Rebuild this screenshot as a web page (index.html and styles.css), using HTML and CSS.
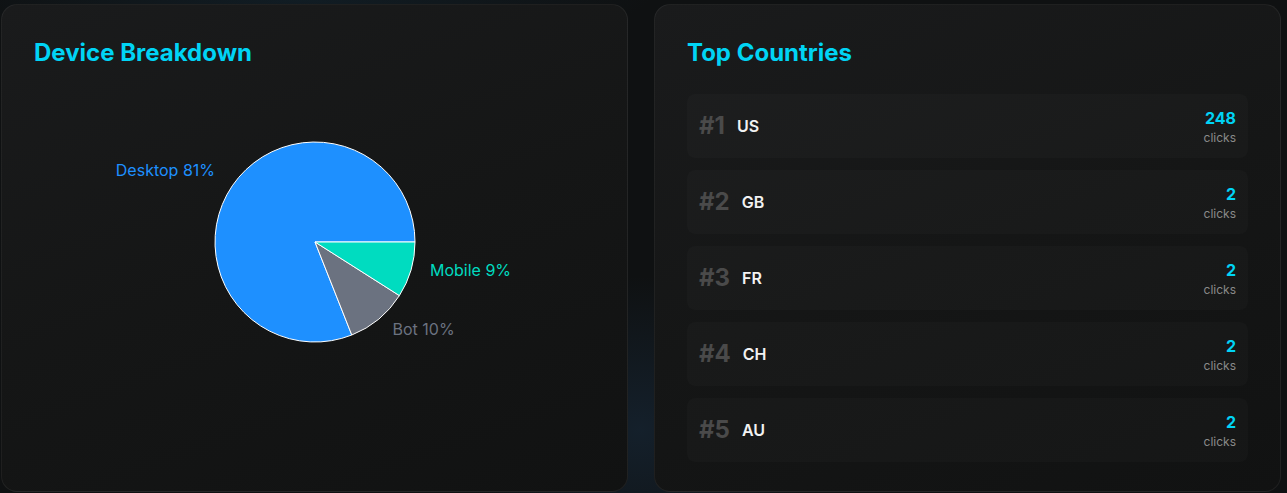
FILE: index.html
```html
<!DOCTYPE html>
<html lang="en">
<head>
<meta charset="utf-8">
<title>Analytics</title>
<link rel="stylesheet" href="styles.css">
</head>
<body>
<main class="grid">
  <section class="card">
    <h2 class="card-title">Device Breakdown</h2>
    <div class="chart">
      <svg class="pie" width="627" height="300" viewBox="0 0 627 300">
        <g transform="translate(-2,-94)">
          <path d="M315 242 L415 242 A100 100 0 1 0 351.8 335 Z" fill="#1e90ff" stroke="#fff" stroke-width="1"/>
          <path d="M315 242 L351.8 335 A100 100 0 0 0 399.4 295.6 Z" fill="#6b7280" stroke="#fff" stroke-width="1"/>
          <path d="M315 242 L399.4 295.6 A100 100 0 0 0 415 242 Z" fill="#00dcc0" stroke="#fff" stroke-width="1"/>
          <text x="215" y="175.5" text-anchor="end" class="lbl" fill="#1e90ff">Desktop 81%</text>
          <text x="430" y="276" class="lbl" fill="#00dcc0">Mobile 9%</text>
          <text x="392.5" y="334.5" class="lbl" fill="#6b7280">Bot 10%</text>
        </g>
      </svg>
    </div>
  </section>
  <section class="card">
    <h2 class="card-title">Top Countries</h2>
    <ul class="list">
      <li class="row"><div class="left"><span class="rank">#1</span><span class="country">US</span></div><div class="right"><span class="num">248</span><span class="unit">clicks</span></div></li>
      <li class="row"><div class="left"><span class="rank">#2</span><span class="country">GB</span></div><div class="right"><span class="num">2</span><span class="unit">clicks</span></div></li>
      <li class="row"><div class="left"><span class="rank">#3</span><span class="country">FR</span></div><div class="right"><span class="num">2</span><span class="unit">clicks</span></div></li>
      <li class="row"><div class="left"><span class="rank">#4</span><span class="country">CH</span></div><div class="right"><span class="num">2</span><span class="unit">clicks</span></div></li>
      <li class="row"><div class="left"><span class="rank">#5</span><span class="country">AU</span></div><div class="right"><span class="num">2</span><span class="unit">clicks</span></div></li>
    </ul>
  </section>
</main>
</body>
</html>
```

FILE: styles.css
```css
* { box-sizing: border-box; }
html, body { margin: 0; height: 100%; }
body {
  font-family: Inter, "Noto Sans", sans-serif;
  background:
    radial-gradient(ellipse 260px 220px at 640px 430px, rgba(30,60,90,0.35), transparent 70%),
    radial-gradient(ellipse 500px 60px at 300px 0px, rgba(20,50,70,0.35), transparent 70%),
    #0f1112;
  overflow: hidden;
  padding: 4px 0 0 1px;
}
.grid {
  display: grid;
  grid-template-columns: 627px 627px;
  gap: 26px;
  align-items: stretch;
}
.card {
  border-radius: 16px;
  border: 1px solid rgba(255,255,255,0.06);
  background: linear-gradient(160deg, #1a1b1c 0%, #151616 50%, #111212 100%);
  padding: 32px 32px 30px;
  height: 488px;
}
.card-title {
  margin: 0 0 25px;
  font-size: 24px;
  line-height: 32px;
  font-weight: 700;
  color: #00d4f5;
}
.chart { margin: 0 -32px; height: 300px; }
.pie { display: block; }
.lbl { font-family: Inter, sans-serif; font-size: 16px; }
.list { list-style: none; margin: 0; padding: 0; display: flex; flex-direction: column; gap: 12px; }
.row {
  height: 64px;
  display: flex;
  align-items: center;
  justify-content: space-between;
  padding: 12px;
  border-radius: 8px;
  background: rgba(255,255,255,0.018);
}
.left { display: flex; align-items: center; gap: 12px; }
.rank { font-size: 24px; line-height: 32px; font-weight: 700; color: #4a4a4a; }
.country { font-size: 16px; line-height: 24px; font-weight: 600; color: #f2f2f2; }
.right { display: flex; flex-direction: column; align-items: flex-end; }
.num { font-size: 16px; line-height: 24px; font-weight: 700; color: #00d4f5; }
.unit { font-size: 12px; line-height: 16px; color: #8a8a8a; }
```
